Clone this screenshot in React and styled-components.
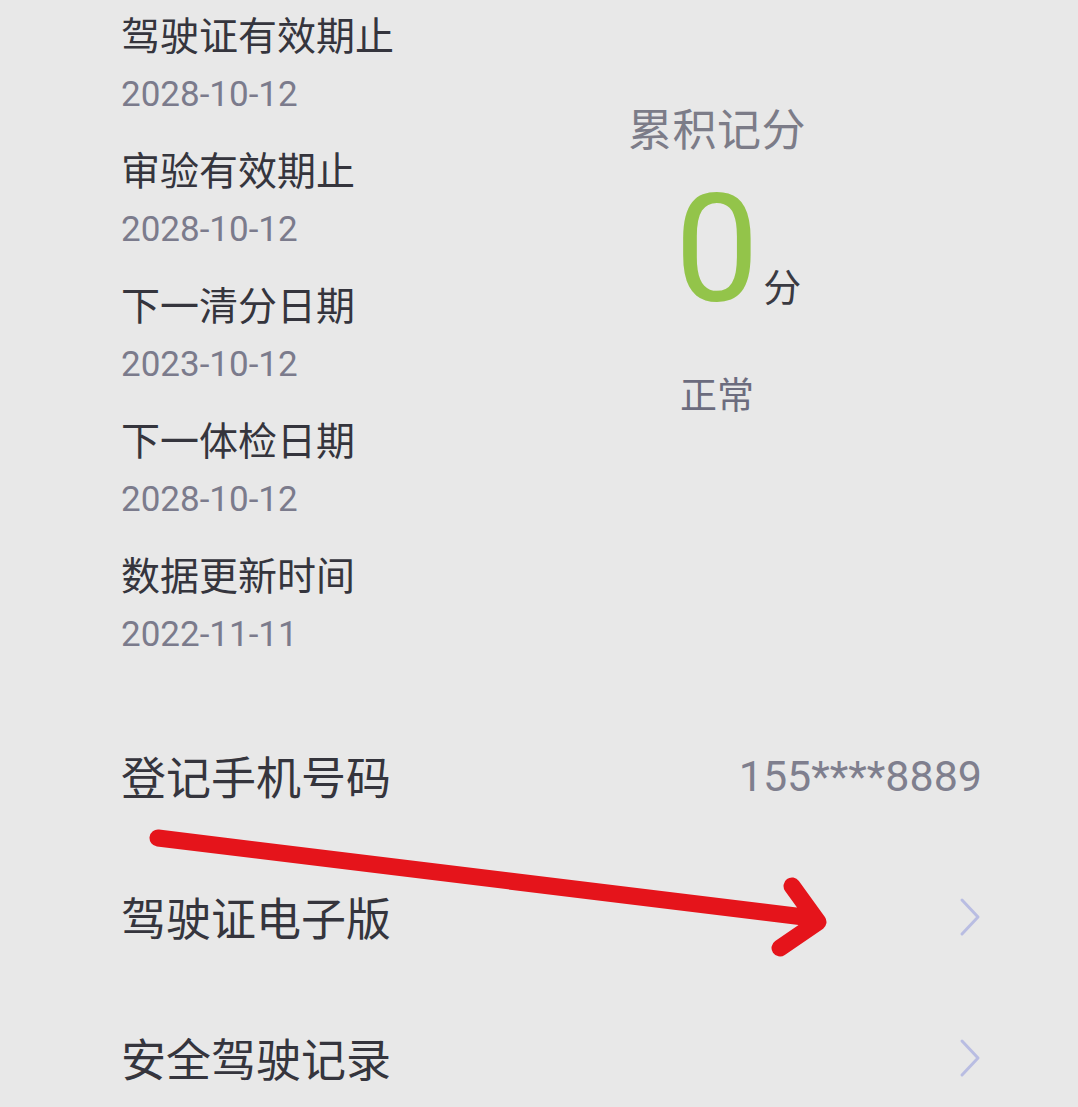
import React from 'react'
import styled, { createGlobalStyle } from 'styled-components'

const GlobalStyle = createGlobalStyle`
  html, body {
    margin: 0;
    padding: 0;
    background: #e8e8e8;
    overflow: hidden;
  }
  body {
    font-family: "Noto Sans CJK SC", "Noto Sans", sans-serif;
  }
`;

const Page = styled.div`
  position: relative;
  width: 1078px;
  height: 1107px;
  background: #e8e8e8;
`;

const Top = styled.section`
  display: grid;
  grid-template-columns: 380px 432px;
  padding: 3px 0 0 121px;
`;

const InfoList = styled.div`
  display: flex;
  flex-direction: column;
  gap: 13px;
`;

const InfoItem = styled.div`
  display: flex;
  flex-direction: column;
`;

const InfoLabel = styled.div`
  font-size: 39px;
  line-height: 60px;
  color: #35353d;
  white-space: nowrap;
`;

const InfoDate = styled.div`
  font-family: Roboto, "Noto Sans CJK SC", sans-serif;
  font-size: 35px;
  line-height: 60px;
  padding-top: 2px;
  color: #7b7b8c;
`;

const Score = styled.div`
  display: flex;
  flex-direction: column;
  align-items: center;
  padding-top: 94px;
`;

const ScoreTitle = styled.div`
  font-size: 44px;
  line-height: 60px;
  color: #7c7c88;
  letter-spacing: 0.5px;
`;

const ScoreRow = styled.div`
  display: flex;
  align-items: baseline;
  margin-top: 18px;
`;

const ScoreNum = styled.span`
  font-family: Roboto, sans-serif;
  font-size: 150px;
  line-height: 150px;
  color: #93c44a;
`;

const ScoreUnit = styled.span`
  font-size: 38px;
  color: #3a3a42;
  margin-left: 4px;
  margin-right: -42px;
`;

const Status = styled.div`
  margin-top: 38px;
  font-size: 37px;
  line-height: 60px;
  color: #6c6c7e;
`;

const Rows = styled.section`
  margin-top: 40px;
  display: flex;
  flex-direction: column;
`;

const Row = styled.div`
  height: 141px;
  display: flex;
  align-items: center;
  justify-content: space-between;
  padding: 0 96px 0 121px;
`;

const RowLabel = styled.span`
  font-size: 45px;
  color: #35353d;
`;

const RowValue = styled.span`
  font-family: Roboto, sans-serif;
  font-size: 43px;
  color: #7f7f8e;
`;

const Chevron = () => (
  <svg width="24" height="40" viewBox="0 0 24 40">
    <path d="M4 3 L20 20 L4 37" fill="none" stroke="#b9bde2" strokeWidth="3" strokeLinecap="round" strokeLinejoin="round" />
  </svg>
);

const Arrow = styled.svg`
  position: absolute;
  top: 0;
  left: 0;
  pointer-events: none;
`;

const info = [
  ['驾驶证有效期止', '2028-10-12'],
  ['审验有效期止', '2028-10-12'],
  ['下一清分日期', '2023-10-12'],
  ['下一体检日期', '2028-10-12'],
  ['数据更新时间', '2022-11-11'],
];

export default function App() {
  return (
    <Page>
      <GlobalStyle />
      <Top>
        <InfoList>
          {info.map(([label, date]) => (
            <InfoItem key={label}>
              <InfoLabel>{label}</InfoLabel>
              <InfoDate>{date}</InfoDate>
            </InfoItem>
          ))}
        </InfoList>
        <Score>
          <ScoreTitle>累积记分</ScoreTitle>
          <ScoreRow>
            <ScoreNum>0</ScoreNum>
            <ScoreUnit>分</ScoreUnit>
          </ScoreRow>
          <Status>正常</Status>
        </Score>
      </Top>
      <Rows>
        <Row>
          <RowLabel>登记手机号码</RowLabel>
          <RowValue>155****8889</RowValue>
        </Row>
        <Row>
          <RowLabel>驾驶证电子版</RowLabel>
          <Chevron />
        </Row>
        <Row>
          <RowLabel>安全驾驶记录</RowLabel>
          <Chevron />
        </Row>
      </Rows>
      <Arrow width="1078" height="1107" viewBox="0 0 1078 1107">
        <path
          d="M158 838 L812 918 M792 886 L818 922 L780 948"
          fill="none"
          stroke="#e5141b"
          strokeWidth="17"
          strokeLinecap="round"
          strokeLinejoin="round"
        />
      </Arrow>
    </Page>
  );
}
